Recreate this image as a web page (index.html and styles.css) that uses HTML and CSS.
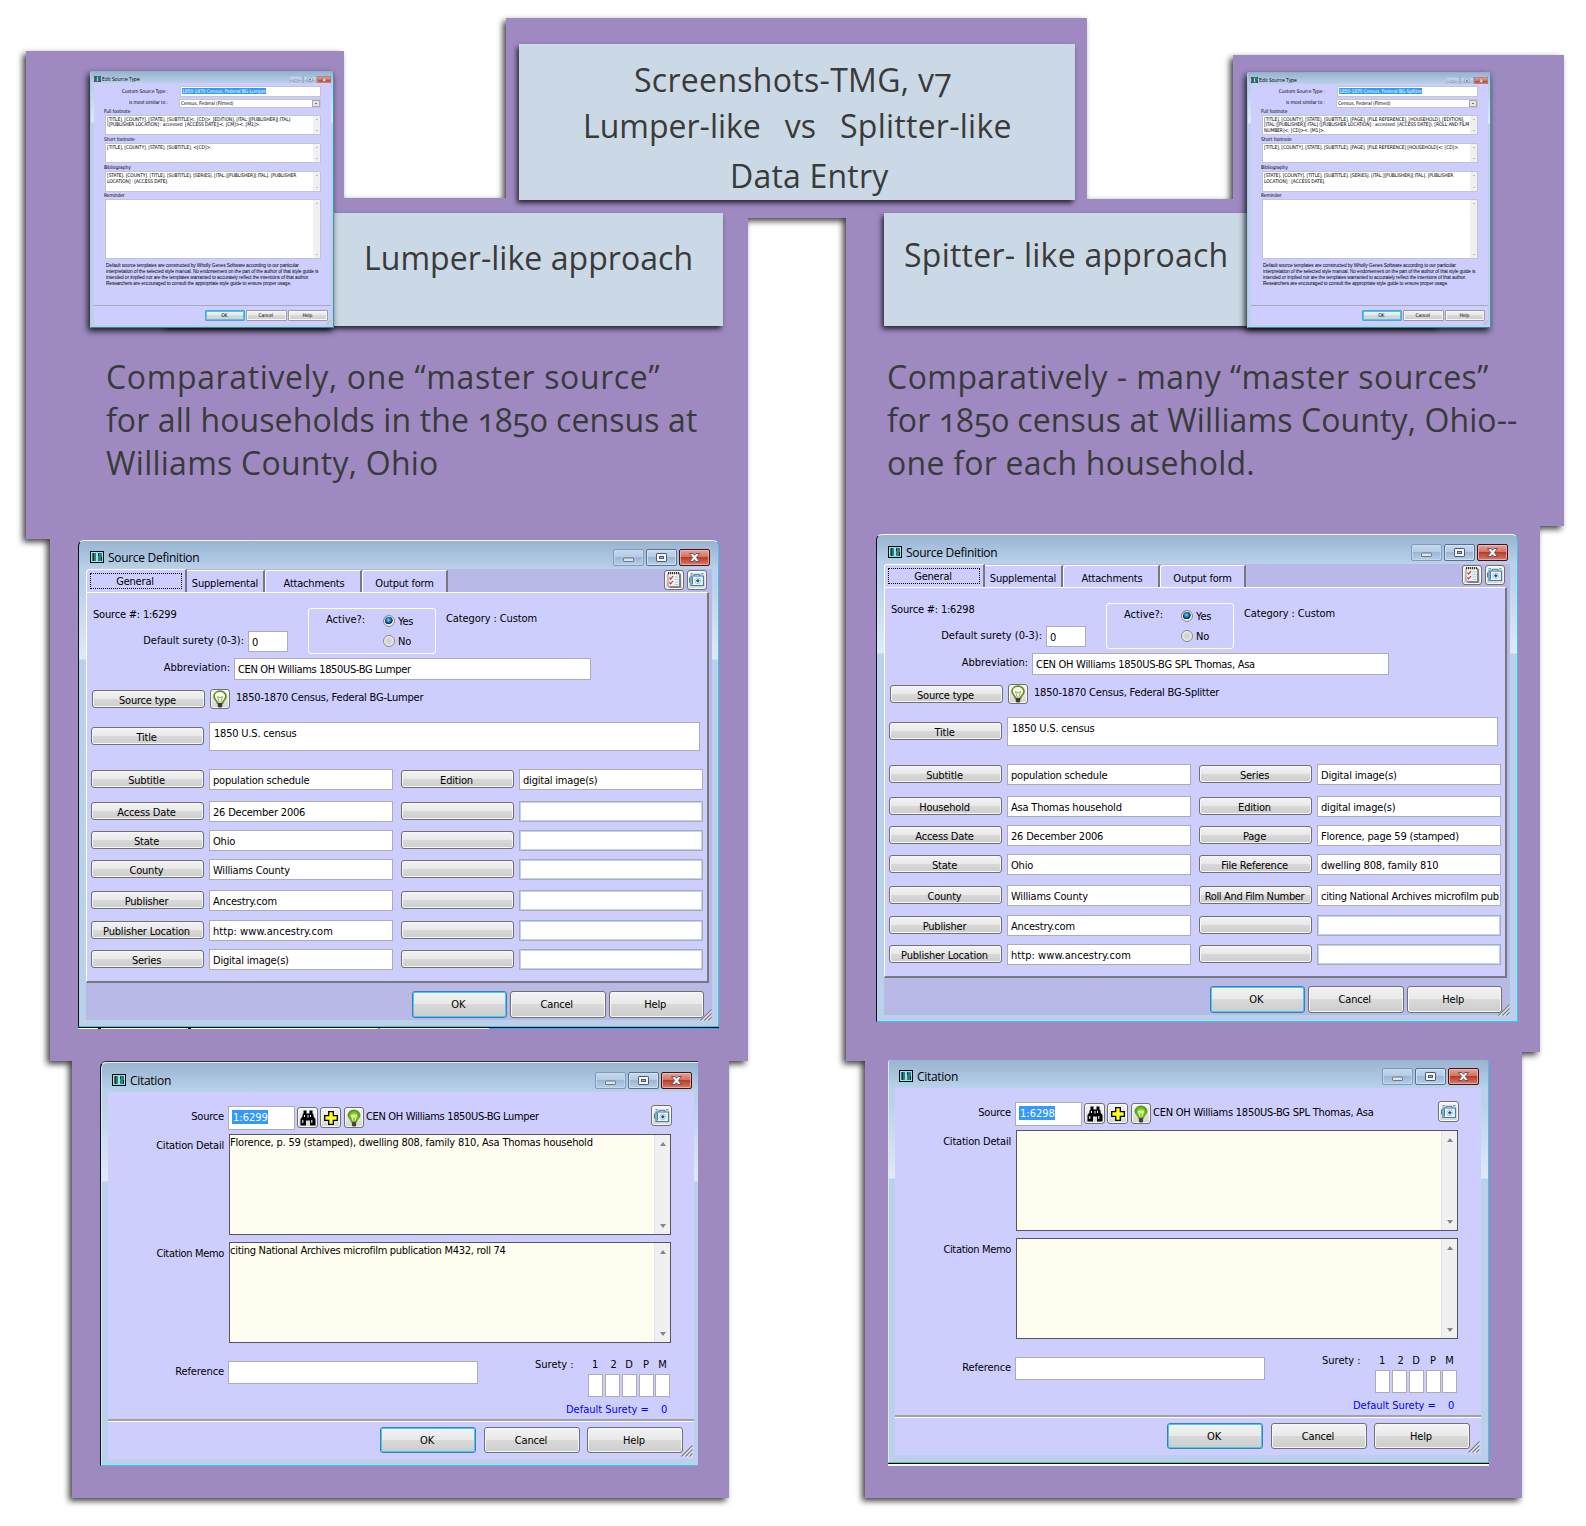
FILE: index.html
```html
<!DOCTYPE html>
<html lang="en">
<head>
<meta charset="utf-8">
<title>Screenshots-TMG, v7</title>
<link rel="stylesheet" href="styles.css">
</head>
<body>
<svg width="0" height="0" class="defs" aria-hidden="true">
  <defs>
    <linearGradient id="red" x1="0" y1="0" x2="0" y2="1"><stop offset="0" stop-color="#e8a79d"/><stop offset=".48" stop-color="#d1705f"/><stop offset=".5" stop-color="#bd3a26"/><stop offset="1" stop-color="#d7816e"/></linearGradient>
    <linearGradient id="pale" x1="0" y1="0" x2="0" y2="1"><stop offset="0" stop-color="#c6d9ee"/><stop offset=".48" stop-color="#b6cbe3"/><stop offset=".5" stop-color="#9cb6d3"/><stop offset="1" stop-color="#b9d1ea"/></linearGradient>
    <radialGradient id="glow"><stop offset="0" stop-color="#d9f36a"/><stop offset=".6" stop-color="#7cc42c"/><stop offset="1" stop-color="#4a8e16"/></radialGradient>
  </defs>
  <symbol id="i-form" viewBox="0 0 14 12">
    <rect x=".5" y=".5" width="13" height="11" fill="#7ff0f0" stroke="#000"/>
    <path d="M2 3h4M2 5h4M2 7h4M2 9h4M8 3h4M8 5h4M8 7h4M8 9h4" stroke="#000"/>
    <path d="M3.500 2v8M8.500 2v3M11.500 6v4" stroke="#000" stroke-width=".6"/>
  </symbol>
  <symbol id="i-ctl" viewBox="0 0 97 18">
    <rect x=".5" y=".5" width="30" height="16" rx="1.5" fill="url(#pale)" stroke="#7f9abb"/>
    <rect x="1.5" y="1.5" width="28" height="14" rx="1" fill="none" stroke="#c9dcf0" stroke-opacity=".7"/>
    <rect x="10.500" y="9" width="10" height="3.500" rx=".6" fill="#dde3ea" stroke="#6b7888"/>
    <rect x="33.500" y=".5" width="30" height="16" rx="1.500" fill="url(#pale)" stroke="#566f93"/>
    <rect x="34.500" y="1.500" width="28" height="14" rx="1" fill="none" stroke="#dce9f6" stroke-opacity=".8"/>
    <rect x="43.500" y="4.500" width="10" height="8" rx=".6" fill="#f3f5f8" stroke="#4d5a6e"/>
    <rect x="46.500" y="7.500" width="4" height="2" fill="#9cb6d3" stroke="#4d5a6e"/>
    <rect x="66.500" y=".5" width="30" height="16" rx="1.500" fill="url(#red)" stroke="#4a1018"/>
    <rect x="67.500" y="1.500" width="28" height="14" rx="1" fill="none" stroke="#f0c4bd" stroke-opacity=".7"/>
    <path d="M76.500 4.500h3.500l1.500 1.800 1.500-1.800h3.500l-3 4 3 4H83l-1.500-1.800-1.500 1.800h-3.500l3-4z" fill="#f4f4f6" stroke="#5c4a55" stroke-width=".9"/>
  </symbol>
  <symbol id="i-bulb" viewBox="0 0 16 18">
    <path d="M8 1.200c-3.700 0-6 2.500-6 5.300 0 2.700 2.900 4 3.600 7h4.800c.7-3 3.600-4.300 3.600-7 0-2.800-2.300-5.300-6-5.300z" fill="#f8fbe9" stroke="#6c8a2a" stroke-width="1.700"/>
    <path d="M5.500 6.500l1.700 6M10.500 6.500l-1.700 6M5.500 6.500l2.500 1.300 2.500-1.300" fill="none" stroke="#7f9a3a" stroke-width=".8"/>
    <path d="M5.800 13h4.400v3.200l-1 1.300H6.800l-1-1.300z" fill="#3a3a30"/>
  </symbol>
  <symbol id="i-green" viewBox="0 0 16 18">
    <path d="M8 1C4.300 1 2 3.500 2 6.300c0 2.700 2.900 4 3.600 6.900h4.800c.7-2.900 3.600-4.200 3.600-6.900C14 3.500 11.700 1 8 1z" fill="url(#glow)" stroke="#4f9416" stroke-width=".8"/>
    <path d="M5.500 6l1.700 6.500M10.500 6l-1.700 6.500M5.500 6l2.500 1.300L10.500 6" fill="none" stroke="#f2ffc0" stroke-width=".9"/>
    <path d="M5.900 13h4.200v3.400l-1 1.100H6.900l-1-1.100z" fill="#444438"/>
  </symbol>
  <symbol id="i-cam" viewBox="0 0 18 18">
    <path d="M3 5h12.500v9.500H3z" fill="#edf5fb" stroke="#3f7fa8" stroke-width="1.200"/>
    <path d="M6 5V3.300h6V5M2.500 2.800H5M13 2.800h2.500M1.500 6.500v5M4.500 5.500v8" fill="none" stroke="#3f7fa8" stroke-width="1"/>
    <circle cx="9.800" cy="9.800" r="2.900" fill="#fff" stroke="#8fb5cd" stroke-width=".8"/>
    <path d="M9.800 7.800l2 2-2 2-2-2z" fill="#245b86"/>
  </symbol>
  <symbol id="i-check" viewBox="0 0 18 18">
    <rect x="4.500" y="2.500" width="11.500" height="14.500" rx="1" fill="#7f7f7f"/>
    <rect x="3" y="2" width="11.500" height="13.500" rx="1" fill="#eef1f2" stroke="#777" stroke-width=".8"/>
    <path d="M3 2.200h12" stroke="#333" stroke-width="2.200" stroke-dasharray="1 1"/>
    <path d="M9.500 6h4M9.500 8.500h4M9.500 11h4M9.500 13.500h4" stroke="#a9d3df"/>
    <path d="M4.500 6.500l1.100 1.500L8 5.200M4.500 11.300l1.100 1.500L8 10" fill="none" stroke="#e02020" stroke-width="1.100"/>
  </symbol>
  <symbol id="i-bino" viewBox="0 0 18 18">
    <path d="M4.500 1.500h3v3h3v-3h3v3l1 1v2l2 2.500v6.500h-5.500v-5H7v5H1.500V10l2-2.500v-2l1-1z" fill="#000"/>
    <path d="M3.800 11v3M12.800 11v3M5.500 6v2M11.500 6v2M9 6v2.500" stroke="#fff"/>
  </symbol>
  <symbol id="i-plus" viewBox="0 0 18 18">
    <path d="M6.700 2.700h4.600v4h4v4.600h-4v4H6.700v-4h-4V6.700h4z" fill="#ffff20" stroke="#000" stroke-width="1.300"/>
  </symbol>
  <symbol id="i-grip" viewBox="0 0 12 12">
    <path d="M1 11.500L11.500 1M5 11.500L11.500 5M9 11.500L11.500 9" stroke="#fff" stroke-width="2.200"/>
    <path d="M.5 11.500L11.500.5M4.500 11.500l7-7M8.500 11.500l3-3" stroke="#77777f" stroke-width="1.300"/>
  </symbol>
</svg>

<div class="board">
  <div class="sheets">
    <div class="sheet s-title"></div>
    <div class="sheet s-l1"></div>
    <div class="sheet s-l2"></div>
    <div class="sheet s-l3"></div>
    <div class="sheet s-r1"></div>
    <div class="sheet s-r2"></div>
    <div class="sheet s-r2b"></div>
    <div class="sheet s-r3"></div>
  </div>

  <header class="plate title">
    <div class="t1">Screenshots-TMG, v7</div>
    <div class="t2"><span>Lumper-like</span><span>vs</span><span>Splitter-like</span></div>
    <div class="t3">Data Entry</div>
  </header>
  <h2 class="plate lumper">Lumper-like approach</h2>
  <h2 class="plate splitter">Spitter- like approach</h2>

  <div class="note note-l">
    <div class="wide">Comparatively, one “master source”</div>
    <div class="mid">for all households in the 1850 census at</div>
    <div class="last">Williams County, Ohio</div>
  </div>
  <div class="note note-r">
    <div class="wide2">Comparatively - many “master sources”</div>
    <div class="mid">for 1850 census at Williams County, Ohio--</div>
    <div class="last">one for each household.</div>
  </div>

  <!-- Edit Source Type: lumper -->
  <section class="win mini mini-l">
    <div class="bar"><svg class="fi"><use href="#i-form"/></svg><span class="cap">Edit Source Type</span><svg class="ctl"><use href="#i-ctl"/></svg></div>
    <div class="client">
      <div class="mrow r1"><span class="lab">Custom Source Type :</span><span class="box"><mark>1850-1870 Census, Federal BG-Lumper</mark></span></div>
      <div class="mrow r2"><span class="lab">is most similar to :</span><span class="box combo">Census, Federal (Filmed)<i></i></span></div>
      <div class="ml">Full footnote</div>
      <div class="mta"><p>[TITLE], [COUNTY], [STATE], [SUBTITLE]&lt;, [CD]&gt;; [EDITION], [ITAL:][PUBLISHER][:ITAL]<br>([PUBLISHER LOCATION] : accessed &nbsp;[ACCESS DATE])&lt;, [CM]&gt;&lt;. [M1]&gt;.</p><span class="sb"></span></div>
      <div class="ml">Short footnote</div>
      <div class="mta"><p>[TITLE], [COUNTY], [STATE], [SUBTITLE], &lt;[CD]&gt;.</p><span class="sb"></span></div>
      <div class="ml">Bibliography</div>
      <div class="mta"><p>[STATE]. [COUNTY]. [TITLE], [SUBTITLE]. [SERIES]. [ITAL:][PUBLISHER][:ITAL]. [PUBLISHER<br>LOCATION] : [ACCESS DATE].</p><span class="sb"></span></div>
      <div class="ml">Reminder</div>
      <div class="mta tall"><p></p><span class="sb"></span></div>
      <p class="legal">Default source templates are constructed by Wholly Genes Software according to our particular<br>interpretation of the selected style manual. No endorsement on the part of the author of that style guide is<br>intended or implied nor are the templates warranted to accurately reflect the intentions of that author.<br>Researchers are encouraged to consult the appropriate style guide to ensure proper usage.</p>
      <div class="foot"><button class="ok">OK</button><button>Cancel</button><button>Help</button><svg class="grip"><use href="#i-grip"/></svg></div>
    </div>
  </section>

  <!-- Edit Source Type: splitter -->
  <section class="win mini mini-r">
    <div class="bar"><svg class="fi"><use href="#i-form"/></svg><span class="cap">Edit Source Type</span><svg class="ctl"><use href="#i-ctl"/></svg></div>
    <div class="client">
      <div class="mrow r1"><span class="lab">Custom Source Type :</span><span class="box"><mark>1850-1870 Census, Federal BG-Splitter</mark></span></div>
      <div class="mrow r2"><span class="lab">is most similar to :</span><span class="box combo">Census, Federal (Filmed)<i></i></span></div>
      <div class="ml">Full footnote</div>
      <div class="mta"><p>[TITLE], [COUNTY], [STATE], [SUBTITLE], [PAGE], [FILE REFERENCE], [HOUSEHOLD], [EDITION],<br>[ITAL:][PUBLISHER][:ITAL] ([PUBLISHER LOCATION] : accessed &nbsp;[ACCESS DATE]), [ROLL AND FILM<br>NUMBER]&lt;; [CD]&gt;&lt;. [M1]&gt;.</p><span class="sb"></span></div>
      <div class="ml">Short footnote</div>
      <div class="mta"><p>[TITLE], [COUNTY], [STATE], [SUBTITLE], [PAGE], [FILE REFERENCE] [HOUSEHOLD]&lt;; [CD]&gt;.</p><span class="sb"></span></div>
      <div class="ml">Bibliography</div>
      <div class="mta"><p>[STATE]. [COUNTY]. [TITLE], [SUBTITLE]. [SERIES]. [ITAL:][PUBLISHER][:ITAL]. [PUBLISHER<br>LOCATION] : [ACCESS DATE].</p><span class="sb"></span></div>
      <div class="ml">Reminder</div>
      <div class="mta tall"><p></p><span class="sb"></span></div>
      <p class="legal">Default source templates are constructed by Wholly Genes Software according to our particular<br>interpretation of the selected style manual. No endorsement on the part of the author of that style guide is<br>intended or implied nor are the templates warranted to accurately reflect the intentions of that author.<br>Researchers are encouraged to consult the appropriate style guide to ensure proper usage.</p>
      <div class="foot"><button class="ok">OK</button><button>Cancel</button><button>Help</button><svg class="grip"><use href="#i-grip"/></svg></div>
    </div>
  </section>

  <!-- Source Definition: lumper -->
  <div class="strip"></div>
  <section class="win src src-l">
    <div class="bar"><svg class="fi"><use href="#i-form"/></svg><span class="cap">Source Definition</span><svg class="ctl"><use href="#i-ctl"/></svg></div>
    <div class="client">
      <div class="tabs"><span class="tab on"><b>General</b></span><span class="tab w1">Supplemental</span><span class="tab w2">Attachments</span><span class="tab w3">Output form</span><span class="tools"><span class="ib"><svg><use href="#i-check"/></svg></span><span class="ib"><svg><use href="#i-cam"/></svg></span></span></div>
      <div class="page">
        <div class="ra">
          <div class="ra-left"><div class="num">Source #: 1:6299</div><div class="sur"><span class="n0">Default surety (0-3):</span><span class="box">0</span></div></div>
          <div class="act"><span>Active?:</span><div><label><i class="rd sel"></i>Yes</label><label><i class="rd"></i>No</label></div></div>
          <div class="cat n1">Category : Custom</div>
        </div>
        <div class="rb"><span class="lab n0">Abbreviation:</span><span class="box n3">CEN OH Williams 1850US-BG Lumper</span></div>
        <div class="rc"><button>Source type</button><span class="ib"><svg><use href="#i-bulb"/></svg></span><span>1850-1870 Census, Federal BG-Lumper</span></div>
        <div class="rd-title"><button>Title</button><span class="box">1850 U.S. census</span></div>
        <div class="grid">
          <button>Subtitle</button><span class="box">population schedule</span><button>Edition</button><span class="box">digital image(s)</span>
          <button>Access Date</button><span class="box">26 December 2006</span><button></button><span class="box off"></span>
          <button>State</button><span class="box">Ohio</span><button></button><span class="box off"></span>
          <button>County</button><span class="box">Williams County</span><button></button><span class="box off"></span>
          <button>Publisher</button><span class="box">Ancestry.com</span><button></button><span class="box off"></span>
          <button>Publisher Location</button><span class="box n4">http: www.ancestry.com</span><button></button><span class="box off"></span>
          <button>Series</button><span class="box">Digital image(s)</span><button></button><span class="box off"></span>
        </div>
      </div>
      <div class="foot"><button class="ok">OK</button><button>Cancel</button><button>Help</button><svg class="grip"><use href="#i-grip"/></svg></div>
    </div>
  </section>

  <!-- Source Definition: splitter -->
  <section class="win src src-r">
    <div class="bar"><svg class="fi"><use href="#i-form"/></svg><span class="cap">Source Definition</span><svg class="ctl"><use href="#i-ctl"/></svg></div>
    <div class="client">
      <div class="tabs"><span class="tab on"><b>General</b></span><span class="tab w1">Supplemental</span><span class="tab w2">Attachments</span><span class="tab w3">Output form</span><span class="tools"><span class="ib"><svg><use href="#i-check"/></svg></span><span class="ib"><svg><use href="#i-cam"/></svg></span></span></div>
      <div class="page">
        <div class="ra">
          <div class="ra-left"><div class="num">Source #: 1:6298</div><div class="sur"><span class="n0">Default surety (0-3):</span><span class="box">0</span></div></div>
          <div class="act"><span>Active?:</span><div><label><i class="rd sel"></i>Yes</label><label><i class="rd"></i>No</label></div></div>
          <div class="cat n1">Category : Custom</div>
        </div>
        <div class="rb"><span class="lab n0">Abbreviation:</span><span class="box n2">CEN OH Williams 1850US-BG SPL Thomas, Asa</span></div>
        <div class="rc"><button>Source type</button><span class="ib"><svg><use href="#i-bulb"/></svg></span><span>1850-1870 Census, Federal BG-Splitter</span></div>
        <div class="rd-title"><button>Title</button><span class="box">1850 U.S. census</span></div>
        <div class="grid">
          <button>Subtitle</button><span class="box">population schedule</span><button>Series</button><span class="box">Digital image(s)</span>
          <button>Household</button><span class="box">Asa Thomas household</span><button>Edition</button><span class="box">digital image(s)</span>
          <button>Access Date</button><span class="box">26 December 2006</span><button>Page</button><span class="box">Florence, page 59 (stamped)</span>
          <button>State</button><span class="box">Ohio</span><button>File Reference</button><span class="box">dwelling 808, family 810</span>
          <button>County</button><span class="box">Williams County</span><button class="n3">Roll And Film Number</button><span class="box n2">citing National Archives microfilm pub</span>
          <button>Publisher</button><span class="box">Ancestry.com</span><button></button><span class="box off"></span>
          <button>Publisher Location</button><span class="box n4">http: www.ancestry.com</span><button></button><span class="box off"></span>
        </div>
      </div>
      <div class="foot"><button class="ok">OK</button><button>Cancel</button><button>Help</button><svg class="grip"><use href="#i-grip"/></svg></div>
    </div>
  </section>

  <!-- Citation: lumper -->
  <section class="win cit cit-l">
    <div class="bar"><svg class="fi"><use href="#i-form"/></svg><span class="cap">Citation</span><svg class="ctl"><use href="#i-ctl"/></svg></div>
    <div class="client">
      <div class="c1"><span class="lab">Source</span><span class="box"><mark>1:6299</mark></span><span class="ib a"><svg><use href="#i-bino"/></svg></span><span class="ib b"><svg><use href="#i-plus"/></svg></span><span class="ib"><svg><use href="#i-green"/></svg></span><span class="nm n3">CEN OH Williams 1850US-BG Lumper</span><span class="ib cam"><svg><use href="#i-cam"/></svg></span></div>
      <div class="c2"><span class="lab">Citation Detail</span><div class="ta"><p>Florence, p. 59 (stamped), dwelling 808, family 810, Asa Thomas household</p><span class="sb"></span></div></div>
      <div class="c2"><span class="lab n3">Citation Memo</span><div class="ta"><p class="n2">citing National Archives microfilm publication M432, roll 74</p><span class="sb"></span></div></div>
      <div class="c3"><span class="lab n1">Reference</span><span class="box"></span><span class="sl n0">Surety :</span>
        <div class="sg"><div class="lt"><span>1</span><span>2</span><span>D</span><span>P</span><span>M</span></div><div class="bx"><i></i><i></i><i></i><i></i><i></i></div><div class="ds"><span class="n0">Default Surety =</span><span>0</span></div></div></div>
      <div class="foot"><button class="ok">OK</button><button>Cancel</button><button>Help</button><svg class="grip"><use href="#i-grip"/></svg></div>
    </div>
  </section>

  <!-- Citation: splitter -->
  <section class="win cit cit-r">
    <div class="bar"><svg class="fi"><use href="#i-form"/></svg><span class="cap">Citation</span><svg class="ctl"><use href="#i-ctl"/></svg></div>
    <div class="client">
      <div class="c1"><span class="lab">Source</span><span class="box"><mark>1:6298</mark></span><span class="ib a"><svg><use href="#i-bino"/></svg></span><span class="ib b"><svg><use href="#i-plus"/></svg></span><span class="ib"><svg><use href="#i-green"/></svg></span><span class="nm n5">CEN OH Williams 1850US-BG SPL Thomas, Asa</span><span class="ib cam"><svg><use href="#i-cam"/></svg></span></div>
      <div class="c2"><span class="lab">Citation Detail</span><div class="ta"><p></p><span class="sb"></span></div></div>
      <div class="c2"><span class="lab n3">Citation Memo</span><div class="ta"><p></p><span class="sb"></span></div></div>
      <div class="c3"><span class="lab n1">Reference</span><span class="box"></span><span class="sl n0">Surety :</span>
        <div class="sg"><div class="lt"><span>1</span><span>2</span><span>D</span><span>P</span><span>M</span></div><div class="bx"><i></i><i></i><i></i><i></i><i></i></div><div class="ds"><span class="n0">Default Surety =</span><span>0</span></div></div></div>
      <div class="foot"><button class="ok">OK</button><button>Cancel</button><button>Help</button><svg class="grip"><use href="#i-grip"/></svg></div>
    </div>
  </section>
</div>
</body>
</html>
```

FILE: styles.css
```css
* { box-sizing: border-box; }
body { margin: 0; background: #fff; }
p, h2 { margin: 0; font-weight: normal; }
.defs { position: absolute; }
.board { position: relative; width: 1586px; height: 1526px; overflow: hidden; }

/* purple backing sheets share one shadow */
.sheets { position: absolute; inset: 0; filter: drop-shadow(-3px 3px 3px rgba(0,0,0,.75)); }
.sheet { position: absolute; background: #9e8ac1; }
.s-title { left: 506px; top: 18px; width: 581px; height: 200px; }
.s-l1 { left: 26px; top: 51px; width: 318px; height: 488px; }
.s-l2 { left: 50px; top: 198px; width: 698px; height: 863px; }
.s-l3 { left: 72px; top: 1000px; width: 657px; height: 498px; }
.s-r1 { left: 1233px; top: 55px; width: 331px; height: 471px; }
.s-r2 { left: 846px; top: 199px; width: 694px; height: 853px; }
.s-r2b { left: 846px; top: 1000px; width: 300px; height: 61px; }
.s-r3 { left: 865px; top: 1000px; width: 657px; height: 498px; }

/* blue plates and captions */
.plate { position: absolute; background: #cbd9e6; box-shadow: -2px 3px 5px rgba(0,0,0,.75); }
.plate, .note { font: 32px/1 "Open Sans", sans-serif; font-variant-numeric: oldstyle-nums; color: #3a3a3a; white-space: nowrap; }
.title { left: 519px; top: 44px; width: 556px; height: 156px; padding-top: 12px; }
.t1 { height: 47px; line-height: 47px; padding-left: 115px; letter-spacing: .3px; }
.t2 { display: flex; gap: 24px; height: 50px; line-height: 46px; padding-left: 64px; }
.t2 span:last-child { letter-spacing: .25px; }
.t3 { height: 46px; line-height: 46px; padding-left: 211px; letter-spacing: .2px; }
.lumper { left: 167px; top: 213px; width: 556px; height: 113px; padding: 29px 0 0 197px; line-height: 32px; letter-spacing: .05px; }
.splitter { left: 884px; top: 213px; width: 555px; height: 113px; padding: 26px 0 0 20px; line-height: 32px; letter-spacing: .25px; }
.note { position: absolute; top: 355px; }
.note div { line-height: 43px; height: 43px; }
.note-l { left: 106px; }
.note-r { left: 887px; }
.note .wide { letter-spacing: .63px; }
.note .wide2 { letter-spacing: .47px; }
.note .mid { letter-spacing: .1px; }
.note .last { letter-spacing: .25px; }

/* window frame */
.win { position: absolute; display: flex; flex-direction: column; border: 1px solid; border-color: #f2f7fc #3bc6e4 #3bc6e4 #0c1116;
  border-radius: 6px 6px 0 0; padding: 0 6px 6px 7px;
  background: linear-gradient(#99b4d1 0, #b9d1ea 28px, #b9d1ea 40px, #dfeaf7 118px, #b9d1ea 119px);
  font: 11px/12px "DejaVu Sans Condensed", "DejaVu Sans", sans-serif; color: #000; letter-spacing: -.2px; white-space: nowrap; }
.bar { display: flex; height: 28px; flex: none; }
.fi { width: 14px; height: 12px; margin: 10px 0 0 4px; }
.cap { margin: 9px 0 0 4px; font: 12px/16px "Open Sans", sans-serif; letter-spacing: -.3px; }
.ctl { width: 97px; height: 18px; margin: 8px 2px 0 auto; }
.client { display: flex; flex-direction: column; flex: 1; min-height: 0; background: #cecefe; }
button { font: inherit; letter-spacing: inherit; color: #000; margin: 0; padding: 0 2px 0 0; border: 1px solid #707070; border-radius: 3px;
  box-shadow: inset 0 0 0 1px #f7f7f7; background: linear-gradient(#f2f2f2 0, #e9e9e9 48%, #d9d9d9 50%, #cdcdcd 100%); }
button.ok { border-color: #3c7fb1; box-shadow: inset 0 0 0 1px #48c9ee; }
.box { background: #fff; border: 1px solid #abadb3; overflow: hidden; }
.ib { display: flex; align-items: center; justify-content: center; width: 20px; height: 20px; border: 1px solid #707070; border-radius: 3px;
  background: linear-gradient(#f6f6f6, #e6e6e6 50%, #d4d4d4); box-shadow: inset 0 0 0 1px #fafafa; }
.ib svg { width: 18px; height: 18px; display: block; flex: none; }
.n0 { letter-spacing: 0; }
.n1 { letter-spacing: -.1px; }
.n2 { letter-spacing: -.28px; }
.n3, button.n3 { letter-spacing: -.34px; }
.n4 { letter-spacing: .05px; }
.n5 { letter-spacing: -.24px; }
.foot { display: flex; justify-content: flex-end; position: relative; flex: none; }
.grip { position: absolute; right: 0; bottom: 0; width: 12px; height: 12px; }
mark { background: #3399ff; color: #fff; }

/* source definition */
.src { width: 641px; height: 487px; }
.src-l { left: 78px; top: 540px; }
.src-r { left: 876px; top: 534px; width: 642px; height: 488px; padding-right: 7px; }
.src-r .bar { height: 29px; padding-top: 1px; }
.src .client { background: #b9b9e7; }
.tabs { display: flex; height: 23px; align-items: flex-end; flex: none; }
.tab { height: 22px; line-height: 25px; text-align: center; background: #cecefe; border-top: 1px solid #fff; border-right: 2px solid #77777d; border-left: 1px solid #fff; border-radius: 3px 0 0 0; }
.tab.on { width: 101px; height: 23px; padding: 3px 3px 0 3px; }
.tab b { display: block; height: 16px; line-height: 15px; border: 1px dotted #000; font-weight: normal; padding-right: 2px; }
.tab.w1 { width: 78px; border-left: 0; border-radius: 0; }
.tab.w2 { width: 97px; padding-left: 2px; }
.tab.w3 { width: 86px; }
.tools { display: flex; gap: 3px; margin: 0 5px 2px auto; }
.page { height: 391px; margin-right: 3px; background: #cecefe; border: solid; border-width: 1px 2px 2px 1px; border-color: #fff #77777d #77777d #fff; padding: 15px 0 0 4px; flex: none; }
.ra { display: flex; height: 46px; }
.ra-left { width: 217px; padding: 1px 0 0 2px; }
.sur { display: flex; justify-content: flex-end; gap: 4px; margin-top: 10px; padding-right: 20px; line-height: 19px; }
.sur .box { width: 40px; height: 21px; padding-left: 3px; line-height: 21px; }
.act { display: flex; width: 128px; border: 1px solid #fff; border-radius: 3px; padding: 2px 0 0 17px; }
.act > span { width: 57px; line-height: 17px; letter-spacing: 0; }
.act label { display: flex; height: 20px; line-height: 21px; gap: 3px; align-items: center; }
.rd { width: 12px; height: 12px; border-radius: 50%; border: 1px solid #8b8b8b; background: radial-gradient(circle, #c9c9c9, #f4f4f4); box-shadow: inset 0 0 0 1px #efefef; }
.rd.sel { background: radial-gradient(circle at 45% 40%, #8fdcff 0, #1c7ab8 25%, #0b3252 48%, #e8e8e8 56%); }
.cat { padding: 5px 0 0 10px; }
.rb { display: flex; gap: 4px; margin-top: 4px; line-height: 20px; }
.rb .lab { width: 139px; text-align: right; }
.rb .box { width: 357px; height: 22px; padding-left: 3px; line-height: 22px; }
.rc { display: flex; margin: 9px 0 0 1px; height: 20px; line-height: 18px; }
.rc button { width: 113px; height: 18px; margin: 1px 5px 0 0; }
.rc .ib { margin-right: 6px; }
.rd-title { display: flex; gap: 5px; margin-top: 13px; }
.rd-title button { width: 113px; height: 18px; margin-top: 5px; }
.rd-title .box { width: 491px; height: 29px; padding-left: 4px; line-height: 21px; }
.grid { display: grid; margin-top: 18px; grid-template-columns: 113px 187px 113px 184px; column-gap: 5px; grid-template-rows: 32px 29px 29px 31px 30px 29px 21px; align-items: start; }
.grid button { height: 18px; margin-top: 1px; }
.grid .box { width: 184px; height: 21px; padding-left: 3px; line-height: 21px; }
.grid .off { box-shadow: inset 0 0 0 1px #bcd3ee; }
.src button { line-height: 17px; }
.src .page button { padding-top: 1px; }
.src .foot { height: 38px; padding: 8px 8px 0 0; gap: 3px; }
.src .foot button { width: 95.5px; height: 27px; }
.strip { position: absolute; left: 78px; top: 1027px; width: 641px; height: 2px; border-top: 1px solid #000;
  background: linear-gradient(90deg, #fff 20px, #111 20px 23px, #fdfbe8 23px 110px, #222 110px 113px, #fff 113px 300px, #999 300px 302px, #eee 302px 411px, #3399ff 411px); }

/* citation */
.cit-l { left: 100px; top: 1062px; width: 598px; height: 404px; border-top-color: #e8eff6; border-right: 0; border-radius: 6px 0 0 0; padding-right: 4px; box-shadow: inset 1px 0 #dfe9f4, 0 -1px #2c2c2c; }
.cit-r { left: 888px; top: 1060px; width: 601px; height: 403px; border-top: 0; padding: 0 7px 7px 6px; border-left-color: #dfeaf5; border-radius: 3px 3px 0 0; box-shadow: 0 1px #000, 0 3px #fff; }
.cit-l .bar { height: 29px; padding-top: 1px; }
.cit .ctl { margin-right: 2px; }
.c1 { display: flex; padding: 13px 22px 0 0; height: 42px; line-height: 23px; flex: none; }
.cit .lab { width: 116px; text-align: right; flex: none; }
.c1 .box { width: 67px; height: 24px; margin: 1px 2px 0 4px; padding: 3px 0 0 3px; line-height: 14px; }
.c1 mark { display: inline-block; height: 14px; width: 36px; padding-left: 1px; letter-spacing: 0; line-height: 15px; }
.c1 .ib { margin: 2px 2px 0 0; width: 20px; height: 21px; }
.c1 .a { width: 21px; }
.c1 .b { width: 21px; margin-right: 3px; }
.c1 .cam { margin: 0 0 0 auto; width: 21px; }
.c2 { display: flex; gap: 5px; height: 108px; line-height: 23px; flex: none; }
.ta { display: flex; justify-content: space-between; width: 442px; height: 101px; background: #fffdf0; border: 1px solid #55555a; line-height: 15px; }
.sb { width: 16px; background: #f0f0f0; display: flex; flex-direction: column; justify-content: space-between; align-items: center; padding: 7px 0 6px; border-left: 1px solid #e4e4e4; }
.sb::before, .sb::after { content: ""; border: 3.5px solid transparent; }
.sb::before { border-top: 0; border-bottom: 4px solid #85858c; }
.sb::after { border-bottom: 0; border-top: 4px solid #85858c; }
.c3 { display: flex; height: 69px; padding-top: 11px; line-height: 21px; flex: none; }
.c3 > .box { width: 250px; height: 23px; margin-left: 4px; }
.sl { margin: -7px 0 0 57px; width: 53px; }
.sg { margin-top: -5px; }
.lt { display: flex; line-height: 17px; height: 18px; }
.lt span { width: 17px; text-align: center; padding-right: 3px; }
.lt span:nth-child(2) { padding: 0; }
.lt span:nth-child(4) { padding-right: 3px; }
.lt span:last-child { width: 15px; padding-right: 0; margin-left: -1px; }
.bx { display: flex; gap: 2px; }
.bx i { width: 15px; height: 23px; background: #fff; border: 1px solid #abadb3; }
.bx i:last-child { margin-left: -1px; }
.ds { display: flex; justify-content: flex-end; gap: 12px; width: 81px; line-height: 12px; margin-top: 7px; color: #00f; padding-right: 2px; }
.cit .foot { border-top: 2px solid #a0a0a6; box-shadow: inset 0 1px #fff; height: 40px; padding: 6px 11px 0 0; gap: 7px; }
.cit .foot button { width: 96px; height: 26px; line-height: 25px; }
.cit .foot .ok { margin-right: 1px; }
.cit .grip { bottom: 2px; right: 1px; }

/* edit source type thumbnails */
.mini { width: 244px; height: 257px; padding: 0 2px 2px 3px; border-radius: 2px 2px 0 0; border-color: #8fb0cc #3f97a6 #2f8896 #a9cbe6; font-size: 5px; line-height: 5.5px; letter-spacing: -.13px;
  background: linear-gradient(#99b4d1 0, #b9d1ea 11px, #b9d1ea 16px, #dfeaf7 50px, #b9d1ea 51px); box-shadow: -2px 3px 6px rgba(0,0,0,.85); }
.mini-l { left: 90px; top: 71px; }
.mini-r { left: 1247px; top: 72px; height: 256px; }
.mini .bar { height: 11px; }
.mini .fi { width: 7px; height: 6px; margin: 4px 0 0 0; }
.mini .cap { margin: 3px 0 0 1px; font-size: 5px; line-height: 8px; letter-spacing: -.05px; }
.mini .ctl { width: 42px; height: 8px; margin: 4px 0 0 auto; }
.mini button { padding-right: 1px; }
.mini-l .client { padding-top: 3px; }
.mini-r .client { padding-top: 2px; }
.mrow { display: flex; }
.mrow .lab { width: 74px; text-align: right; flex: none; }
.mini .box { border-color: #c2c4d2; }
.r1 { height: 13px; line-height: 11px; }
.r1 .box { width: 141px; height: 11px; margin-left: 12px; padding-left: 1px; line-height: 8.5px; }
.r2 { height: 8.5px; line-height: 7px; }
.r2 .box { display: flex; justify-content: space-between; width: 142px; height: 9px; margin-left: 11px; padding-left: 1px; line-height: 7.5px; }
.combo i { width: 8px; background: #e4e4e4; border: 1px solid #aaa; display: flex; align-items: center; justify-content: center; }
.combo i::after { content: ""; border: 1.5px solid transparent; border-top-color: #000; border-bottom: 0; }
.ml { height: 7px; line-height: 6.5px; margin-left: 10px; flex: none; }
.mta { display: flex; justify-content: space-between; width: 216px; height: 20.5px; margin: 0 0 .8px 11px; background: #fff; border: 1px solid #c2c4d2; padding-left: 1px; flex: none; }
.mta p { padding-top: 1px; }
.mta.tall { height: 60px; margin-bottom: 0; }
.mini .sb { width: 7px; padding: 3px 0; border-left: 0; }
.mini .sb::before, .mini .sb::after { border-left-width: 1.5px; border-right-width: 1.5px; }
.mini .sb::before { border-bottom-width: 1.5px; }
.mini .sb::after { border-top-width: 1.5px; }
.legal { font: 4.8px/5.9px "Liberation Sans", sans-serif; letter-spacing: -.1px; margin: 4px 0 0 12px; }
.mini .foot { margin-top: auto; border-top: 1px solid #a9a9b4; height: 20px; padding: 4px 3px 0 0; gap: 1px; }
.mini .foot button { width: 40.5px; height: 11px; border-radius: 1px; border-color: #9a9aa4; }
.mini .foot .ok { border-color: #4ba6cf; }
.mini .grip { width: 5px; height: 5px; }
```
